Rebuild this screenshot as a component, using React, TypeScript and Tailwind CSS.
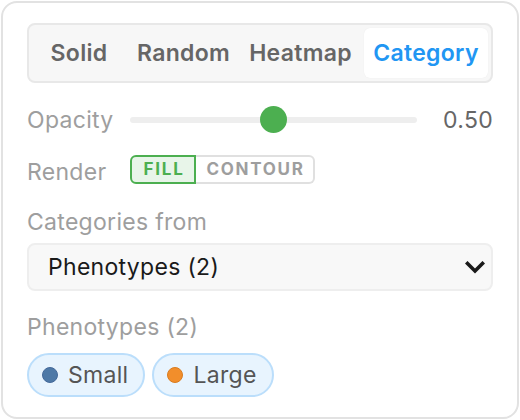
import React from "react";

const font = { fontFamily: "Inter, 'Noto Sans', sans-serif" };

export default function App() {
  return (
    <div className="w-[520px] h-[420px] bg-white p-px" style={font}>
      <div className="w-[518px] h-[418px] rounded-[16px] border-2 border-[#e2e2e2] bg-white px-[24px] flex flex-col">
        {/* Segmented control */}
        <div className="mt-[20px] h-[60px] rounded-[8px] border-2 border-[#e8e8e8] bg-[#f7f7f7] flex items-center px-[3px]">
          <div className="ml-[11px] w-[72px] h-[50px] flex items-center justify-center text-[23px] tracking-[0.3px] font-semibold text-[#666666]">Solid</div>
          <div className="ml-[14px] w-[109px] h-[50px] flex items-center justify-center text-[23px] tracking-[0.3px] font-semibold text-[#666666]">Random</div>
          <div className="ml-[3px] w-[119px] h-[50px] flex items-center justify-center text-[23px] tracking-[0.3px] font-semibold text-[#666666]">Heatmap</div>
          <div className="ml-[4px] w-[124px] h-[50px] flex items-center justify-center rounded-[6px] bg-white shadow-[0_0_1px_rgba(0,0,0,0.08)] text-[23px] tracking-[0.3px] font-semibold text-[#2196f3]">Category</div>
        </div>

        {/* Opacity */}
        <div className="mt-[23px] h-[28px] flex items-center">
          <span className="w-[103px] text-[23px] tracking-[0.3px] leading-[28px] text-[#9e9e9e]">Opacity</span>
          <div className="relative w-[287px] h-[28px] flex items-center">
            <div className="w-full h-[6px] rounded-full bg-[#eeeeee]" />
            <div className="absolute left-[130px] top-[0px] w-[27px] h-[27px] rounded-full bg-[#4caf50]" />
          </div>
          <span className="ml-auto text-[23px] tracking-[0.3px] leading-[28px] text-[#666666]">0.50</span>
        </div>

        {/* Render */}
        <div className="mt-[21px] h-[29px] flex items-start">
          <span className="w-[103px] mt-[3px] text-[23px] tracking-[0.3px] leading-[29px] text-[#9e9e9e]">Render</span>
          <div className="flex h-[29px]">
            <div className="w-[66px] h-[29px] flex items-center justify-center rounded-l-[6px] border-2 border-[#4caf50] bg-[#e8f5e9] text-[17px] font-bold tracking-[1.8px] pl-[2px] text-[#4caf50]">FILL</div>
            <div className="w-[119px] h-[29px] flex items-center justify-center rounded-r-[6px] border-2 border-l-0 border-[#e0e0e0] bg-white text-[17px] font-bold tracking-[1.7px] pl-[2px] text-[#9e9e9e]">CONTOUR</div>
          </div>
        </div>

        {/* Categories from */}
        <div className="mt-[23px] h-[30px] text-[23px] tracking-[0.3px] leading-[30px] text-[#9e9e9e]">Categories from</div>
        <div className="mt-[6px] h-[48px] rounded-[8px] border-2 border-[#eeeeee] bg-[#f8f8f8] flex items-center pl-[19px] pr-[6px]">
          <span className="text-[23px] tracking-[0.3px] text-[#1a1a1a]">Phenotypes (2)</span>
          <svg className="ml-auto" width="20" height="13" viewBox="0 0 20 13">
            <polyline points="2.5,2.5 10,10 17.5,2.5" fill="none" stroke="#1a1a1a" strokeWidth="3.6" strokeLinecap="square" />
          </svg>
        </div>

        {/* Phenotypes */}
        <div className="mt-[21px] h-[30px] text-[23px] tracking-[0.3px] leading-[30px] text-[#9e9e9e]">Phenotypes (2)</div>
        <div className="mt-[11px] flex gap-[7px]">
          <div className="h-[44px] rounded-full border-2 border-[#bbdefb] bg-[#e8f4fe] flex items-center pl-[13px] pr-[15px]">
            <span className="w-[16px] h-[16px] rounded-full bg-[#4e79a7] border border-[#44699a]" />
            <span className="ml-[10px] text-[23px] tracking-[0.3px] text-[#555555]">Small</span>
          </div>
          <div className="h-[44px] rounded-full border-2 border-[#bbdefb] bg-[#e8f4fe] flex items-center pl-[13px] pr-[15px]">
            <span className="w-[16px] h-[16px] rounded-full bg-[#f28e2b] border border-[#d97c20]" />
            <span className="ml-[10px] text-[23px] tracking-[0.3px] text-[#555555]">Large</span>
          </div>
        </div>
      </div>
    </div>
  );
}
